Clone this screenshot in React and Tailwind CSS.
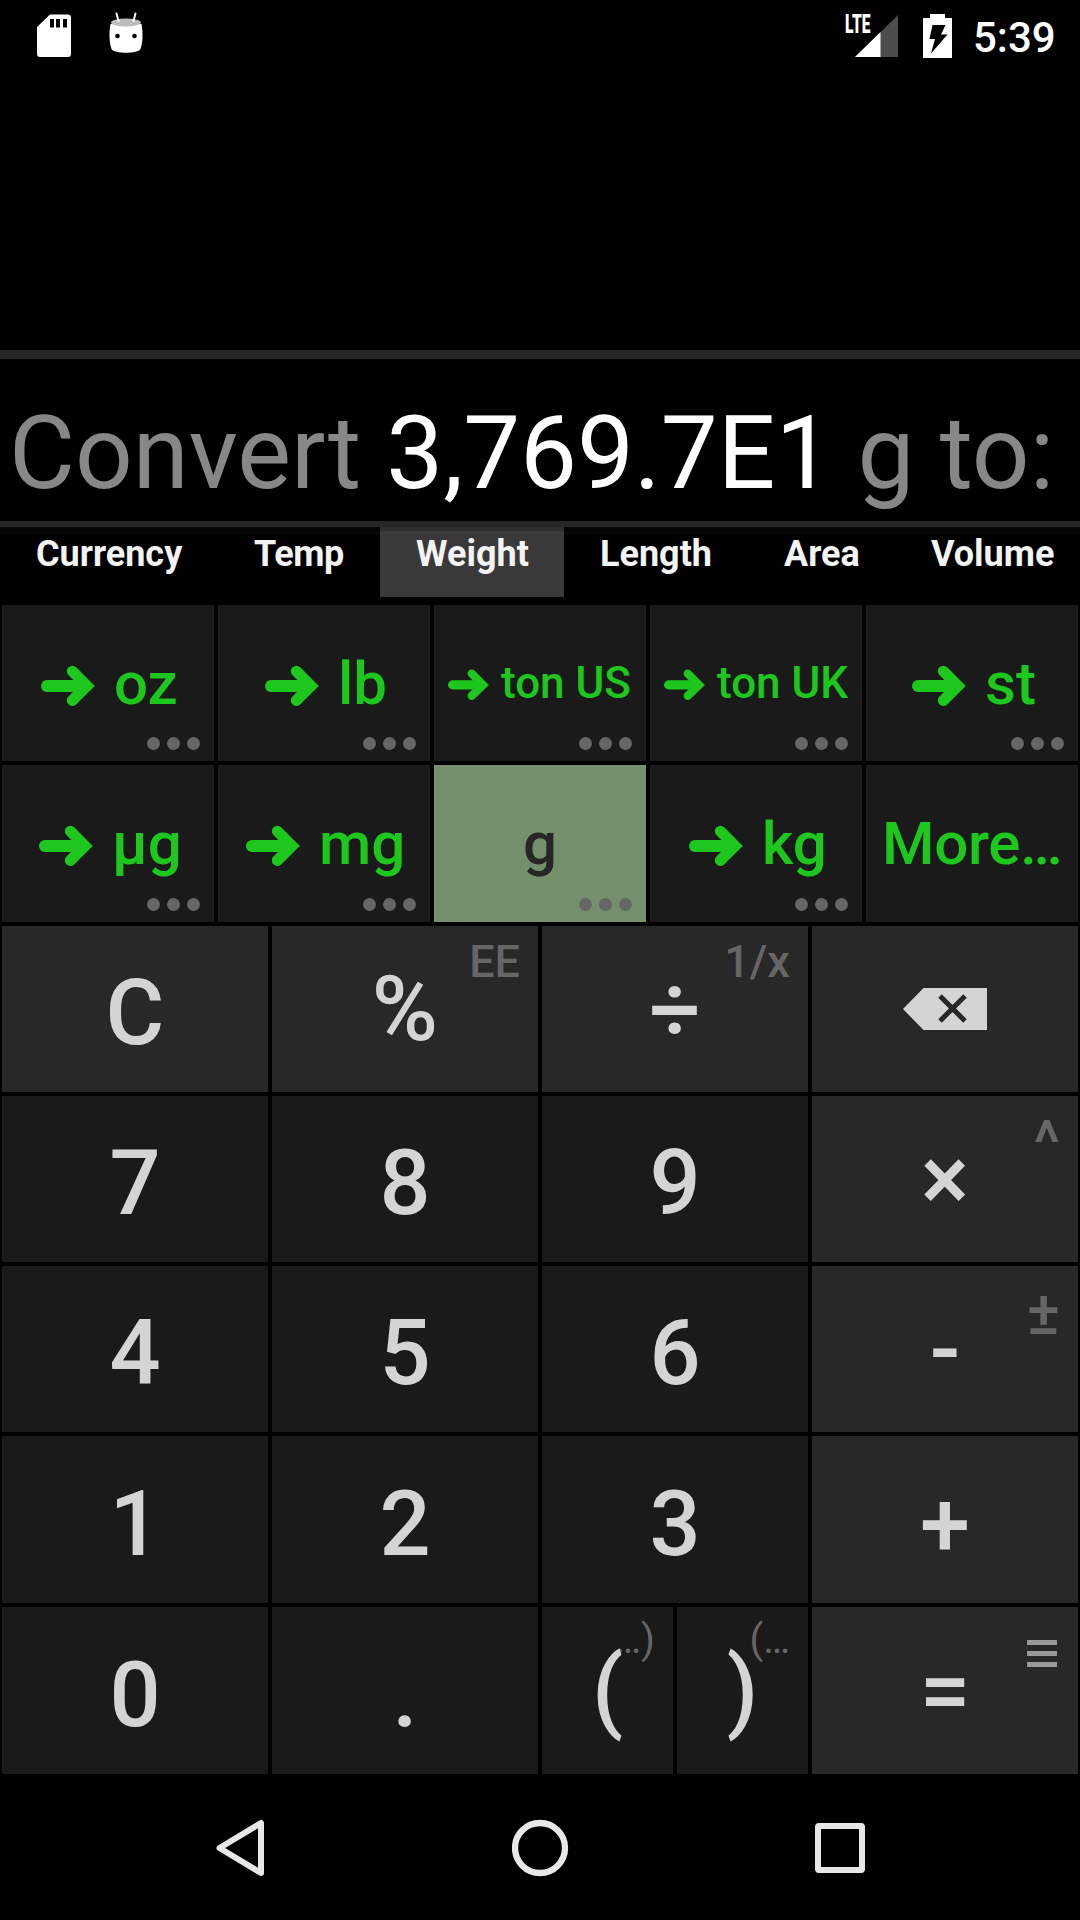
import React from "react";

function Arrow({ className }) {
  return (
    <svg viewBox="0 0 54 41" preserveAspectRatio="none" className={className} fill="none" stroke="#1dc71d">
      <path d="M6 21H44" strokeWidth="12" strokeLinecap="round" />
      <path d="M31.300 6.200L46 21L31.300 35.500" strokeWidth="11" strokeLinecap="round" strokeLinejoin="miter" />
    </svg>
  );
}

const units = [
  { label: "oz", pad: "pl-[39px] pt-[49px]", gap: "ml-[19px]" },
  { label: "lb", pad: "pl-[47px] pt-[49px]", gap: "ml-[19px]" },
  { label: "ton US", small: true, pad: "pl-[14px] pt-[56px]", gap: "ml-[12px]" },
  { label: "ton UK", small: true, pad: "pl-[14px] pt-[56px]", gap: "ml-[12px]" },
  { label: "st", pad: "pl-[46px] pt-[49px]", gap: "ml-[19px]" },
  { label: "µg", pad: "pl-[37px] pt-[49px]", gap: "ml-[19px]" },
  { label: "mg", pad: "pl-[28px] pt-[49px]", gap: "ml-[19px]" },
  { label: "g", active: true, pad: "pl-[89px] pt-[49px]", gap: "" },
  { label: "kg", pad: "pl-[39px] pt-[49px]", gap: "ml-[19px]" },
  { label: "More…", plain: true, pad: "pl-[16px] pt-[49px]", gap: "tracking-[-0.3px]" },
];

function UnitKey({ unit }) {
  const { label, small, active, plain, pad, gap } = unit;
  return (
    <div className={`relative flex items-start font-medium whitespace-pre ${pad} ${active ? "bg-[#748f6c] text-[#262626]" : "bg-[#1a1a1a] text-[#1dc71d]"}`}>
      {!active && !plain && <Arrow className={small ? "mt-[8px] h-[31px] w-[41px]" : "mt-[11px] h-[41px] w-[54px]"} />}
      <span className={`${small ? "text-[44px] leading-[45px]" : "text-[60px] leading-[60px]"} ${gap}`}>{label}</span>
      {!plain && (
        <span className="absolute right-[14px] bottom-[11px] flex gap-[7px]">
          <i className="size-[13px] rounded-full bg-[#666]" />
          <i className="size-[13px] rounded-full bg-[#666]" />
          <i className="size-[13px] rounded-full bg-[#666]" />
        </span>
      )}
    </div>
  );
}

function Key({ children, op, hint, className = "pt-[43px]", hintClass = "top-[13px] right-[18px] text-[45px] leading-[45px]" }) {
  return (
    <div className={`relative flex items-start justify-center text-[90px] leading-[90px] font-medium text-[#d4d4d4] ${op ? "bg-[#282828]" : "bg-[#1a1a1a]"} ${className}`}>
      {hint && <span className={`absolute text-[#666] ${hintClass}`}>{hint}</span>}
      <span className="relative">{children}</span>
    </div>
  );
}

const tabs = [
  { name: "Currency", width: "w-[218px]" },
  { name: "Temp", width: "w-[162px] tracking-[-0.4px]" },
  { name: "Weight", width: "w-[184px]" },
  { name: "Length", width: "w-[184px]" },
  { name: "Area", width: "w-[147px]" },
  { name: "Volume", width: "w-[185px]" },
];

const largeHint = "top-[16px] right-[18px] text-[62px] leading-[62px]";
const parenHint = "top-[10px] right-[18px] text-[40px] leading-[45px] font-normal";

export default function App() {
  return (
    <div className="flex h-[1920px] w-[1080px] flex-col overflow-hidden bg-black font-['Roboto',sans-serif]">
      <header className="flex h-[72px] items-start text-white">
        <svg className="mt-[14px] ml-[37px] h-[43px] w-[34px]" viewBox="0 0 34 43">
          <path d="M13 .5H31a3 3 0 0 1 3 3V40a3 3 0 0 1-3 3H3a3 3 0 0 1-3-3V13Z" fill="#fff" />
          <path d="M13 5h4v8.500h-4zM19 5h4v8.500h-4zM26 5h4v8.500h-4z" fill="#000" />
        </svg>
        <svg className="mt-[12px] ml-[38px] h-[42px] w-[34px]" viewBox="0 0 34 42">
          <path d="M1.500 12C0 20 0 30 2.500 37C5 42 29 42 31.500 37C34 30 34 20 32.500 12Z" fill="#fff" />
          <ellipse cx="17" cy="10.500" rx="15" ry="4" fill="#bdbdbd" />
          <path d="M7.500 1.500L9.500 9M26.500 1.500L24.500 9" stroke="#fff" strokeWidth="2" strokeLinecap="round" />
          <circle cx="8.500" cy="24" r="2.300" fill="#000" />
          <circle cx="25.500" cy="24" r="2.300" fill="#000" />
        </svg>
        <div className="relative mt-[15px] ml-[702px] h-[42px] w-[53px]">
          <svg className="absolute right-0 h-[42px] w-[43px]" viewBox="0 0 43 42">
            <path d="M43 0V42H0Z" fill="#4d4d4d" />
            <path d="M25.500 17V42H0Z" fill="#fff" />
          </svg>
          <span className="absolute top-0 left-0 origin-left scale-x-[0.6] text-[26px] leading-[19px] font-black">LTE</span>
        </div>
        <svg className="mt-[14px] ml-[25px] h-[44px] w-[29px]" viewBox="0 0 29 44">
          <path d="M7 0H22V4H29V44H0V4H7Z" fill="#fff" />
          <path d="M9.500 11H22.500L18 20.500H24.500L8 39.500L12 25H6.500Z" fill="#000" />
        </svg>
        <span className="mt-[17px] ml-[21px] text-[42px] leading-[42px] font-medium">5:39</span>
      </header>

      <div className="mt-[278px] h-[9px] bg-[#262626]" />
      <div className="h-[162px] pt-[43px] pl-[9px] text-[101.4px] leading-[103px] whitespace-pre text-[#878787]">
        Convert <span className="text-white">3,769.7E1</span> g to:
      </div>
      <div className="h-[6px] bg-[#262626]" />

      <nav className="flex h-[70px] bg-[linear-gradient(#050505_8px,#000_8px)] text-[36px] leading-[36px] font-bold text-[#f3f3f3]">
        {tabs.map((t) => (
          <div key={t.name} className={`pt-[9px] pl-[36px] ${t.width} ${t.name === "Weight" ? "bg-[linear-gradient(#2d2d2d_4px,#393939_4px)]" : ""}`}>
            {t.name}
          </div>
        ))}
      </nav>

      <section className="mt-[8px] grid grid-cols-5 grid-rows-[156px_157px] gap-[4px] px-[2px]">
        {units.map((u) => (
          <UnitKey key={u.label} unit={u} />
        ))}
      </section>

      <main className="mt-[4px] grid grid-cols-4 grid-rows-[166px_166px_166px_167px_167px] gap-[4px] px-[2px]">
        <Key op>C</Key>
        <Key op hint="EE" className="pt-[39px]">%</Key>
        <Key op hint="1/x" className="pt-[40px]">÷</Key>
        <div className="flex justify-center bg-[#282828] pt-[62px]">
          <svg className="h-[42px] w-[84px]" viewBox="0 0 84 42">
            <path d="M0 21L20.500 0H84V42H20.500Z" fill="#d4d4d4" />
            <path d="M37 8L62 33M62 8L37 33" stroke="#282828" strokeWidth="5" />
          </svg>
        </div>
        <Key>7</Key>
        <Key>8</Key>
        <Key>9</Key>
        <Key op hint="^" hintClass={largeHint} className="pt-[39px]">×</Key>
        <Key>4</Key>
        <Key>5</Key>
        <Key>6</Key>
        <Key op hint="±" hintClass={largeHint} className="pt-[39px]">-</Key>
        <Key className="pt-[44px]">1</Key>
        <Key className="pt-[44px]">2</Key>
        <Key className="pt-[44px]">3</Key>
        <Key op className="pt-[45px]">+</Key>
        <Key className="pt-[44px]">0</Key>
        <Key className="pt-[44px]">.</Key>
        <div className="grid grid-cols-2 gap-[4px]">
          <Key hint="…)" hintClass={parenHint} className="pt-[39px]">(</Key>
          <Key hint="(…" hintClass={parenHint} className="pt-[39px]">)</Key>
        </div>
        <Key
          op
          className="pt-[40px]"
          hintClass="top-[33px] right-[21px] flex flex-col gap-[6px]"
          hint={
            <>
              <i className="h-[5px] w-[30px] bg-[#999]" />
              <i className="h-[5px] w-[30px] bg-[#999]" />
              <i className="h-[5px] w-[30px] bg-[#999]" />
            </>
          }
        >
          =
        </Key>
      </main>

      <footer className="flex h-[146px] items-center pt-[2px] pl-[216px]">
        <svg className="h-[58px] w-[48px]" viewBox="0 0 48 58" fill="none" stroke="#e8e8e8" strokeWidth="6" strokeLinejoin="round">
          <path d="M3.500 29L45 4V54Z" />
        </svg>
        <svg className="ml-[248px] size-[58px]" viewBox="0 0 58 58" fill="none" stroke="#e8e8e8" strokeWidth="6.300">
          <circle cx="28" cy="29" r="25" />
        </svg>
        <div className="ml-[245px] h-[50px] w-[50px] rounded-[4px] border-[6px] border-[#e8e8e8]" />
      </footer>
    </div>
  );
}
